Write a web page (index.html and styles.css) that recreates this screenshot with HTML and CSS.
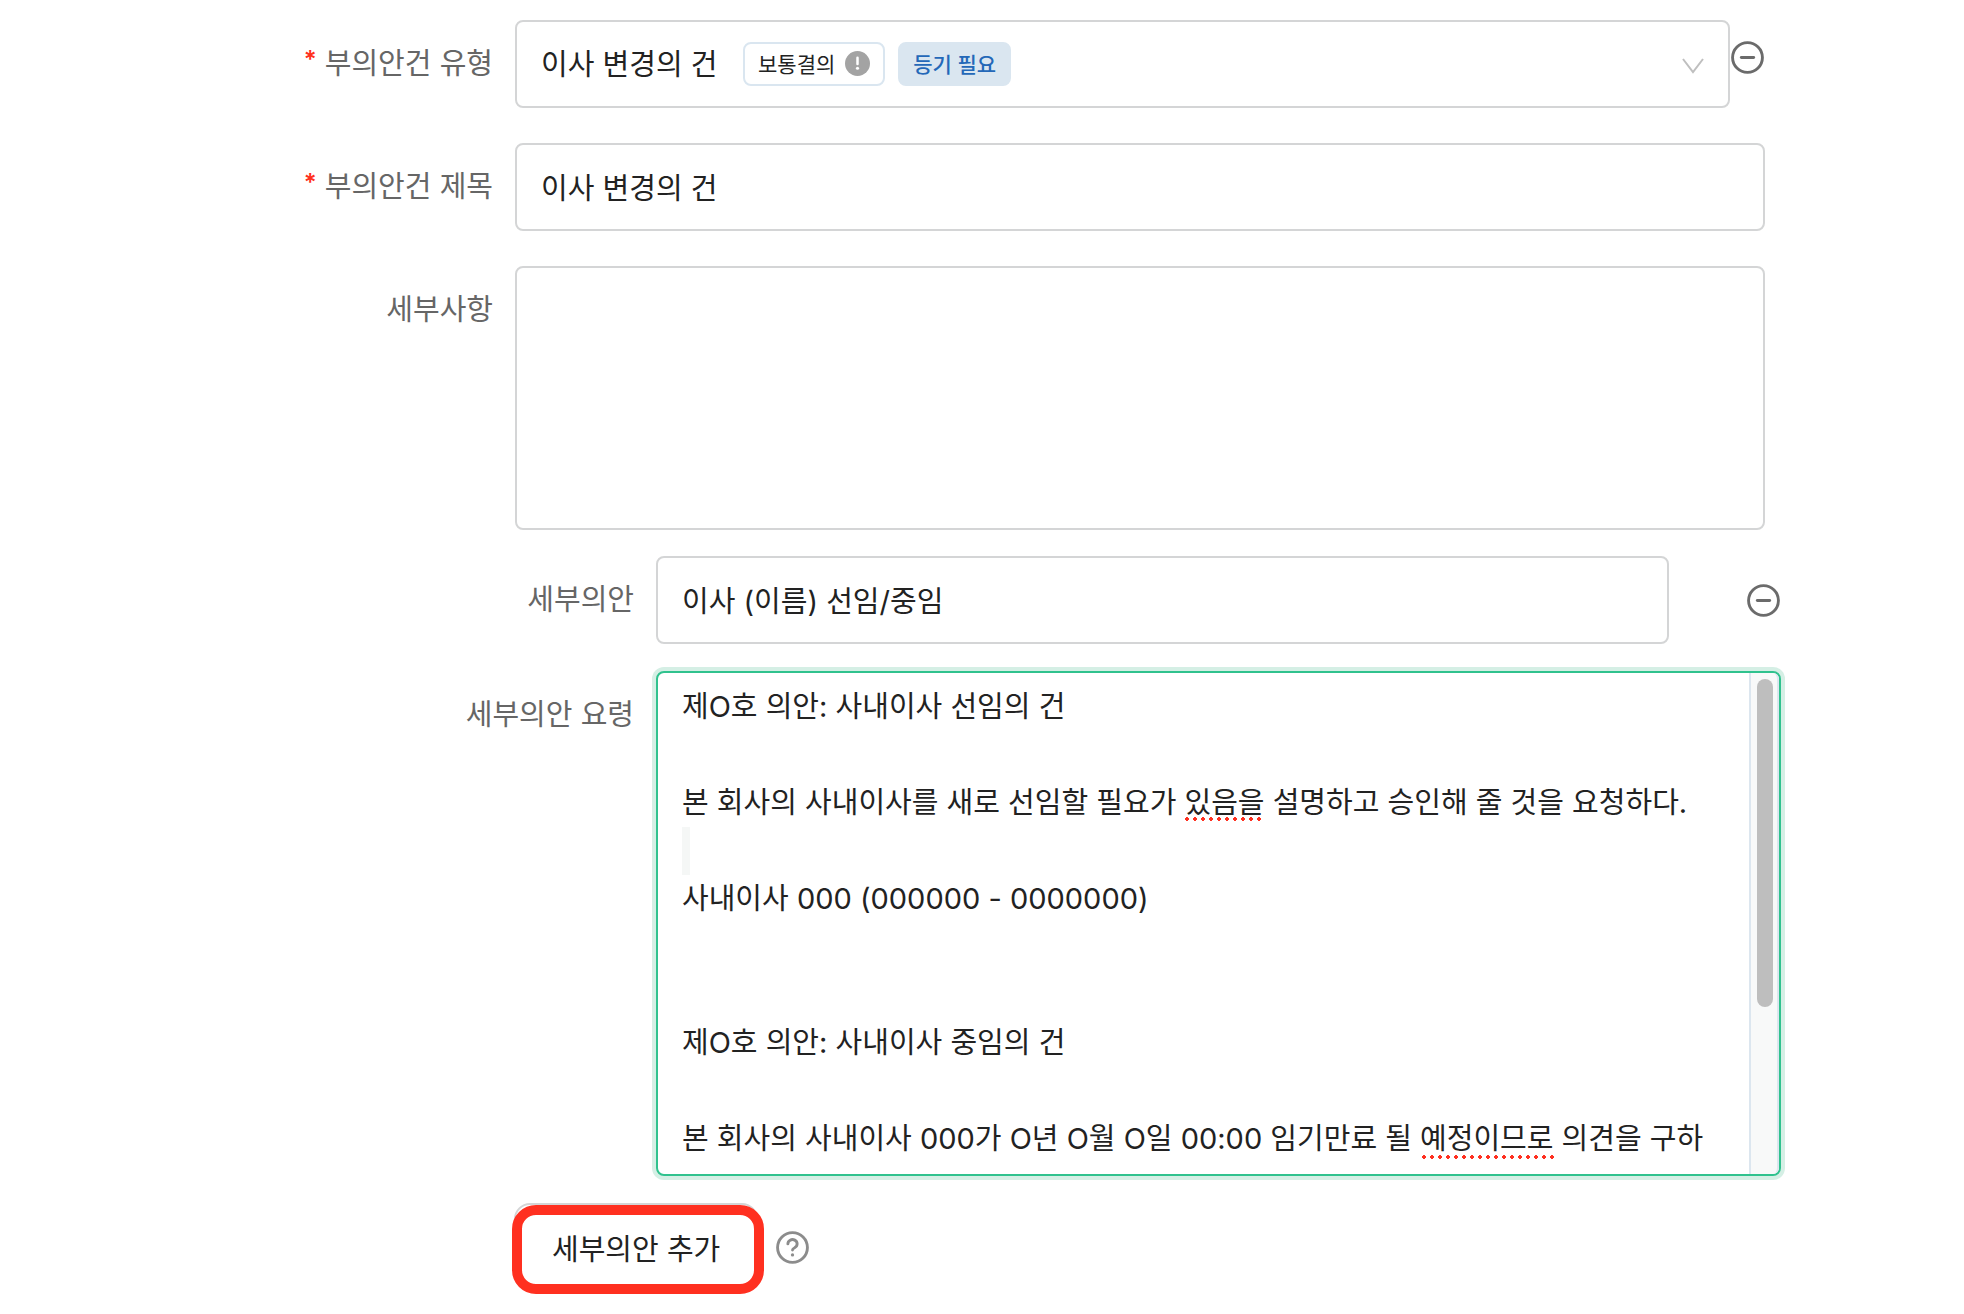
FILE: index.html
```
<!DOCTYPE html>
<html lang="ko">
<head>
  <meta charset="UTF-8">
  <title>부의안건</title>
  <link rel="stylesheet" href="styles.css">
</head>
<body>

  <form class="agenda-form">
    <div class="form-row">
      <label class="form-label required" for="type">부의안건 유형</label>
      <div class="form-field">
        <div class="select-wrap">
          <select id="type" class="form-input">
            <option selected>이사 변경의 건</option>
          </select>
          <div class="tags">
            <span class="tag">보통결의
              <svg class="tag-icon" viewBox="0 0 24 24"><circle cx="12" cy="12" r="12" fill="#a3a3a3"/><path d="M12 6.5v6" stroke="#fff" stroke-width="2.4" stroke-linecap="round"/><circle cx="12" cy="16.5" r="1.5" fill="#fff"/></svg>
            </span>
            <span class="tag tag-blue">등기 필요</span>
          </div>
          <svg class="arrow" viewBox="0 0 24 18"><path d="M2 2l10 13L22 2" fill="none" stroke="#bfbfbf" stroke-width="2"/></svg>
        </div>
        <button type="button" class="icon-btn top" aria-label="삭제">
          <svg viewBox="0 0 34 34"><circle cx="17" cy="17" r="14.5" fill="none" stroke="#6b6b6b" stroke-width="2.8"/><path d="M11 17h12" stroke="#6b6b6b" stroke-width="2.8" stroke-linecap="round"/></svg>
        </button>
      </div>
    </div>

    <div class="form-row">
      <label class="form-label required" for="title">부의안건 제목</label>
      <div class="form-field">
        <input type="text" id="title" class="form-input" value="이사 변경의 건">
      </div>
    </div>

    <div class="form-row">
      <label class="form-label" for="detail">세부사항</label>
      <div class="form-field">
        <textarea id="detail" class="form-input detail"></textarea>
      </div>
    </div>

    <div class="sub-agenda">
      <div class="form-row">
        <label class="form-label" for="sub">세부의안</label>
        <div class="form-field between">
          <input type="text" id="sub" class="form-input sub-input" value="이사 (이름) 선임/중임">
          <button type="button" class="icon-btn" aria-label="삭제">
            <svg viewBox="0 0 34 34"><circle cx="17" cy="17" r="14.5" fill="none" stroke="#6b6b6b" stroke-width="2.8"/><path d="M11 17h12" stroke="#6b6b6b" stroke-width="2.8" stroke-linecap="round"/></svg>
          </button>
        </div>
      </div>

      <div class="form-row">
        <label class="form-label" for="summary">세부의안 요령</label>
        <div class="form-field">
          <textarea id="summary" class="form-input summary" spellcheck="false">제O호 의안: 사내이사 선임의 건

본 회사의 사내이사를 새로 선임할 필요가 있음을 설명하고 승인해 줄 것을 요청하다.

사내이사 000 (000000 - 0000000)


제O호 의안: 사내이사 중임의 건

본 회사의 사내이사 000가 O년 O월 O일 00:00 임기만료 될 예정이므로 의견을 구하</textarea>
          <span class="blank-mark"></span>
          <span class="spell spell-1"></span>
          <span class="spell spell-2"></span>
          <div class="scrollbar"><div class="thumb"></div></div>
        </div>
      </div>
    </div>

    <div class="form-actions">
      <div class="add-wrap">
        <button type="button" class="add-btn">세부의안 추가</button>
        <span class="highlight"></span>
      </div>
      <button type="button" class="icon-btn" aria-label="도움말">
        <svg viewBox="0 0 34 34" fill="none" stroke="#8c8c8c" stroke-width="2.8"><circle cx="17" cy="17" r="14.5"/><path d="M12.5 13.5a4.5 4.2 0 1 1 6.8 3.6c-1.6 1-2.3 1.5-2.3 2.4" stroke-linecap="round"/><circle cx="17" cy="24.2" r="1.6" fill="#8c8c8c" stroke="none"/></svg>
      </button>
    </div>
  </form>

</body>
</html>
```
FILE: styles.css
```
* {
  box-sizing: border-box;
}

body {
  margin: 0;
  background: #fff;
  color: #222;
  font-family: Inter, "Noto Sans CJK KR", sans-serif;
  font-size: 29px;
}

.agenda-form {
  display: flex;
  flex-direction: column;
  gap: 35px;
  padding: 20px 199px 20px 0;
}

.form-row {
  display: flex;
  align-items: flex-start;
  gap: 22px;
}

.form-label {
  width: 493px;
  height: 88px;
  flex-shrink: 0;
  line-height: 88px;
  text-align: right;
  color: #666;
}

.required::before {
  content: "*";
  margin-right: 8px;
  color: #ff3020;
  font-size: 24px;
  font-weight: 600;
  line-height: 1;
  vertical-align: 6px;
}

.form-field {
  flex: 1;
  display: flex;
  position: relative;
}

.form-field.between {
  justify-content: space-between;
  align-items: center;
}

.form-input {
  display: block;
  width: 100%;
  height: 88px;
  padding: 0 24px;
  border: 2px solid #d4d5d6;
  border-radius: 8px;
  background: #fff;
  color: inherit;
  font: inherit;
  outline: none;
  appearance: none;
}

input.form-input {
  padding-bottom: 3px;
}

textarea.form-input {
  padding: 10px 24px;
  line-height: 48px;
  resize: none;
}

.select-wrap {
  flex: 1;
  position: relative;
}

.tags {
  position: absolute;
  left: 228px;
  top: 22px;
  display: flex;
  gap: 13px;
  pointer-events: none;
}

.tag {
  display: flex;
  align-items: center;
  gap: 10px;
  height: 44px;
  padding: 0 13px 2px;
  border: 2px solid #dae6f0;
  border-radius: 8px;
  font-size: 21px;
}

.tag-blue {
  background: #dae6f0;
  color: #2468b8;
  font-weight: 500;
}

.tag-icon {
  width: 25px;
  height: 25px;
}

.arrow {
  position: absolute;
  right: 25px;
  top: 37px;
  width: 24px;
  height: 18px;
  pointer-events: none;
}

.icon-btn {
  width: 35px;
  height: 35px;
  padding: 0;
  border: 0;
  background: none;
  cursor: pointer;
}

.icon-btn svg {
  display: block;
  width: 100%;
}

.icon-btn.top {
  margin-top: 20px;
}

.detail {
  height: 264px;
}

/* 세부의안 */
.sub-agenda {
  display: flex;
  flex-direction: column;
  gap: 27px;
  margin: -9px -16px -8px 141px;
}

.sub-input {
  width: 90%;
}

.summary {
  height: 505px;
  border-color: #30c28e;
  box-shadow: 0 0 0 4px #d5efe5;
  overflow: hidden;
}

.blank-mark {
  position: absolute;
  left: 26px;
  top: 156px;
  width: 8px;
  height: 48px;
  background: #f5f7f6;
}

/* 맞춤법 표시 */
.spell {
  position: absolute;
  height: 4px;
  background: radial-gradient(circle, #ff3020 2px, transparent 2px) 0 0 / 8px 4px;
}

.spell-1 {
  left: 527px;
  top: 146px;
  width: 80px;
}

.spell-2 {
  left: 764px;
  top: 484px;
  width: 134px;
}

.scrollbar {
  position: absolute;
  top: 2px;
  right: 2px;
  bottom: 2px;
  width: 30px;
  padding: 6px;
  background: #f8f9f9;
  border: solid #dce6ef;
  border-width: 0 2px;
  border-radius: 0 6px 6px 0;
}

.thumb {
  width: 16px;
  height: 67%;
  background: #bebebe;
  border-radius: 8px;
}

.form-actions {
  display: flex;
  align-items: center;
  gap: 17px;
  padding-left: 514px;
}

.add-wrap {
  position: relative;
}

.add-btn {
  height: 88px;
  padding: 0 36px;
  border: 2px solid #d4d5d6;
  border-radius: 16px;
  background: #fff;
  color: inherit;
  font: inherit;
  cursor: pointer;
}

.highlight {
  position: absolute;
  inset: 2px -6px -3px -2px;
  border: 10px solid #ff3020;
  border-radius: 24px;
  pointer-events: none;
}
```
